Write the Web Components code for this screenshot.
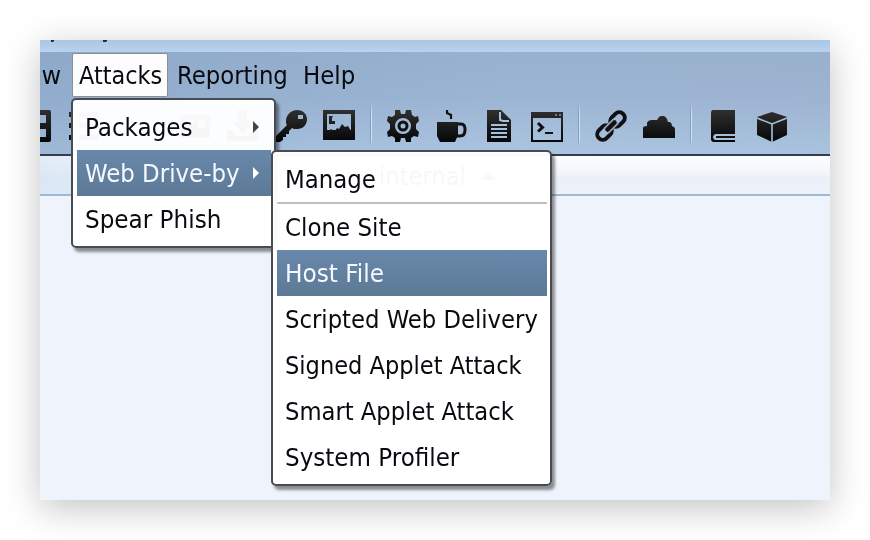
<!DOCTYPE html>
<html lang="en"><head><meta charset="utf-8"><title>Attacks menu</title>
<style>
html,body{margin:0;width:870px;height:540px;overflow:hidden;background:#fff}
body{font:24px/46px "DejaVu Sans Condensed","DejaVu Sans",sans-serif;color:#080a10;padding:40px;box-sizing:border-box}
</style></head><body>
<app-window>
  <menu-bar slot="bar">
    <fit-label class="view" w="57">View</fit-label>
    <bar-item open><fit-label w="83">Attacks</fit-label></bar-item>
    <fit-label class="rep" w="111">Reporting</fit-label>
    <fit-label class="help" w="52">Help</fit-label>
  </menu-bar>
  <tool-bar slot="tools"></tool-bar>
  <table-head slot="head"><fit-label w="87">internal</fit-label></table-head>
  <pop-menu slot="over" style="left:31px;top:58px;width:205px">
    <menu-row arrow><fit-label w="108">Packages</fit-label></menu-row>
    <menu-row arrow selected><fit-label w="155">Web Drive-by</fit-label></menu-row>
    <menu-row><fit-label w="136">Spear Phish</fit-label></menu-row>
  </pop-menu>
  <pop-menu slot="over" style="left:231px;top:110px;width:281px">
    <menu-row><fit-label w="91">Manage</fit-label></menu-row>
    <menu-rule></menu-rule>
    <menu-row><fit-label w="117">Clone Site</fit-label></menu-row>
    <menu-row selected><fit-label w="99">Host File</fit-label></menu-row>
    <menu-row><fit-label w="253">Scripted Web Delivery</fit-label></menu-row>
    <menu-row><fit-label w="237">Signed Applet Attack</fit-label></menu-row>
    <menu-row><fit-label w="229">Smart Applet Attack</fit-label></menu-row>
    <menu-row><fit-label w="174">System Profiler</fit-label></menu-row>
  </pop-menu>
</app-window>
<script>
const define=(name,html,ready)=>customElements.define(name,class extends HTMLElement{
  constructor(){super();this.attachShadow({mode:'open'}).innerHTML=html}
  connectedCallback(){if(ready)ready(this)}
});

define('app-window',`<style>
:host{display:block;position:relative;width:790px;height:460px;background:#eff3fb;box-shadow:0 8px 34px rgba(0,0,0,.24)}
.clip{height:460px;overflow:hidden;display:flex;flex-direction:column}
.title{height:12px;flex:none;background:linear-gradient(#abc6e2,#b8d3ef)}
.title svg{display:block}
.chrome{height:102px;flex:none;border-bottom:2px solid #343d50;background:linear-gradient(90deg,rgba(90,125,170,.16),rgba(160,180,205,0) 60%,rgba(160,175,195,.12)),linear-gradient(#98b1ce,#9cb5d3 45%,#abc5e1)}
</style><div class="clip"><div class="title"><svg width="80" height="3" fill="#1d2a3c"><path d="M11 0h3v1l-1 1h-2zM63 0h4v1l-1 1h-3z"/></svg></div>
<div class="chrome"><slot name="bar"></slot><slot name="tools"></slot></div><slot name="head"></slot></div><slot name="over"></slot>`);

define('menu-bar',`<style>
:host{display:flex;height:46px;align-items:flex-start;padding-top:1px;box-sizing:border-box}
::slotted(.view){margin-left:-36px;margin-right:11px}
::slotted(.rep){margin-left:9px}
::slotted(.help){margin-left:15px}
::slotted(fit-label){line-height:46px}
</style><slot></slot>`);

define('bar-item',`<style>
:host{display:block;box-sizing:border-box;width:96px;height:44px;line-height:44px;padding-left:6px;border:1px solid #8b8f96;border-radius:2px;background:#fdfdfe}
</style><slot></slot>`);

/* Scales its text horizontally to the advance width given in "w". */
define('fit-label',`<style>
:host{display:block;white-space:nowrap;flex:none}
span{display:inline-block;transform-origin:0 50%}
</style><span><slot></slot></span>`,el=>{
  const w=+el.getAttribute('w'),s=el.shadowRoot.querySelector('span');
  el.style.width=w+'px';
  s.style.transform=`scaleX(${w/s.offsetWidth})`;
});

define('tool-bar',`<style>
:host{display:block;height:54px}
.row{display:flex;height:54px;align-items:center;padding-top:2px;box-sizing:border-box}
svg{flex:none;width:32px;height:32px;overflow:visible}
i{flex:none;width:2px;height:48px;margin-top:-4px;background:linear-gradient(90deg,#819bbb 50%,#d3e4f5 50%);-webkit-mask:linear-gradient(transparent,#000 30%,#000 80%,transparent)}
.k{fill:url(#ink)}.l{stroke:#a7c0dc;fill:none}.d{stroke:#111;fill:none}
</style><div class="row">
<svg style="margin-left:-20px"><defs><linearGradient id="ink" gradientUnits="userSpaceOnUse" x1="0" y1="0" x2="0" y2="32"><stop stop-color="#303030"/><stop offset="1" stop-color="#050608"/></linearGradient></defs><path class="k" fill-rule="evenodd" d="M2 0h27q2 0 2 2v28q0 2-2 2H2zm13 5h11v8H15zm0 14h11v8H15z"/></svg>
<svg style="margin-left:16px"><path class="k" d="M1 2h4v5H1zm10 0h20v5H11zM1 13h4v5H1zm10 0h20v5H11zM1 25h4v5H1zm10 0h20v5H11z"/></svg>
<svg style="margin-left:80px"><path class="k" fill-rule="evenodd" d="M0 5h30v23H0zm5 5v4h8v-4zm13 0v8h7v-8z"/></svg>
<svg style="margin-left:15px"><path class="k" d="M11 0h9v11h7L15.5 23 5 11h6zM0 20h5l4 6h13l4-6h5v11H0z"/></svg>
<svg style="margin-left:16px"><path class="k" fill-rule="evenodd" d="M22 0c6 0 10 4 10 9 0 6-4 10-10 10-2 0-4 0-5-1l-3 3v3h-3v3H8v3l-3 2H0v-5l12-12c-1-1-1-2-1-4 0-6 5-11 11-11zm1 5v4h5V5z"/></svg>
<svg style="margin-left:16px"><path class="k" fill-rule="evenodd" d="M0 0h32v30H0zm4 4v17h2l2-2 3 2h1l2-3 2 1 3-5 3 3 3-1 3 5V4z"/><path class="k" d="M10 6H6v8h6v-3H9V8zM4 20h24v6H4z"/></svg>
<i style="margin-left:15px"></i>
<svg style="margin-left:15px"><path class="k" fill-rule="evenodd" d="M8 0h5l1 4h4l1-4h5l1 5 3 2 3-1 1 5-3 3v5l3 3-1 5-4-1-3 2v4h-5l-1-4h-4l-1 4H8v-4l-3-2-4 1-1-5 3-3v-5l-3-3 1-5 4 1 3-2zm8 8a8 8 0 1 0 0 16 8 8 0 0 0 0-16z"/><circle cx="16" cy="16" r="4" class="d" stroke-width="3"/></svg>
<svg style="margin-left:18px"><path class="k" d="M0 12h21v13l-3 7H3l-3-6z"/><path class="d" d="M21 14h3q4 0 4 5v1q0 6-5 6h-3" stroke-width="3"/><path class="d" d="M10 0v3l4 2v4" stroke-width="2.2"/></svg>
<svg style="margin-left:18px"><path class="k" d="M0 0h14l10 10v22H0z"/><path d="M13 2v8l3 1h6" class="l" stroke-width="2"/><path class="l" stroke-width="2" d="M4 15h16M4 19h16M4 23h16M4 27h16"/></svg>
<svg style="margin-left:12px"><path class="k" fill-rule="evenodd" d="M0 2h32v30H0zm2 6v22h28V8z"/><path class="d" d="M7 13l4.500 4.500-4.500 4" stroke-width="3"/><path class="d" stroke-width="2" d="M14 23h8"/><path stroke="#6e7b8c" stroke-width="2" d="M24 5h2m2 0h2"/></svg>
<i style="margin-left:15px"></i>
<svg style="margin-left:15px"><g class="d" stroke-width="4"><rect x="-5.500" y="-8" width="11" height="16" rx="5.500" transform="translate(22.500 9.500) rotate(45)"/><rect x="-5.500" y="-8" width="11" height="16" rx="5.500" transform="translate(9.500 22.500) rotate(45)"/></g><path d="M11 21L21 11" stroke="#8fa6c1" stroke-width="8"/><path d="M12.500 19.500L19.500 12.500" class="d" stroke-width="4.500" stroke-linecap="round"/></svg>
<svg style="margin-left:16px"><path class="k" d="M0 18q0-2 4-2v-3q1-3 5-3h5l2-3q1-1 3-1h2q2 1 3 3l1 3h2q2 1 2 4 3 1 3 3v9H0z"/></svg>
<i style="margin-left:15px"></i>
<svg style="margin-left:19px"><path class="k" d="M2 0h22v24H4q-2 2-2 3 0 2 2 3h20v2H3q-3 0-3-3V3q0-3 2-3z"/><path d="M5 27h19" stroke="#111" stroke-width="2"/></svg>
<svg style="margin-left:14px"><path class="k" d="M15 2l15 5v18l-15 7-15-7V7z"/><path class="l" stroke-width="1.6" d="M0 8l15 6 15-6M15 14v18"/></svg>
</div>`);

define('table-head',`<style>
:host{display:flex;height:40px;line-height:42px;flex:none;box-sizing:border-box;border-bottom:2px solid #9fb9d2;padding-left:339px;
background:linear-gradient(90deg,rgba(205,223,242,.55),transparent 40%),linear-gradient(#fdfeff,#f2f5fa 45%,#ebf0f8 60%,#edf3fa)}
b{width:0;height:0;border:8px solid transparent;border-bottom-color:#445;border-top:0;margin:16px 0 0 15px}
</style><slot></slot><b></b>`);

define('pop-menu',`<style>
:host{display:block;position:absolute;box-sizing:border-box;border:2px solid #484c52;border-radius:5px;padding:4px 3px 4px 4px;background:rgba(255,255,255,.97);box-shadow:3px 4px 3px rgba(0,0,0,.42)}
</style><slot></slot>`);

define('menu-row',`<style>
:host{display:flex;height:46px;align-items:center;justify-content:space-between;padding:2px 12px 0 8px;box-sizing:border-box}
:host([selected]){color:#f5f9fd;background:linear-gradient(#6888ab,#5d7996)}
b{display:none;width:0;height:0;margin-top:-2px;border:6px solid transparent;border-left:6px solid #444;border-right:0}
:host([arrow]) b{display:block}
:host([selected]) b{border-left-color:#fff}
</style><slot></slot><b></b>`);

define('menu-rule',`<style>:host{display:block;height:2px;background:#bfbfbf}</style>`);
</script></body></html>
